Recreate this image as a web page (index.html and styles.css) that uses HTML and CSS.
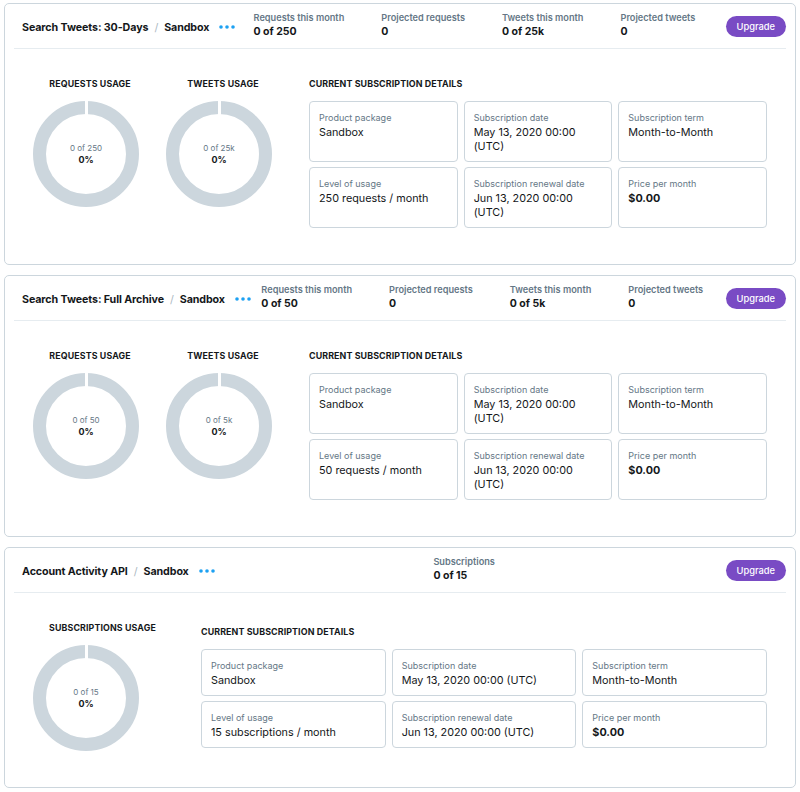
FILE: index.html
```html
<!DOCTYPE html>
<html>
<head>
<meta charset="utf-8">
<link rel="stylesheet" href="styles.css">
</head>
<body>

<section class="card">
  <header class="card-head">
    <div class="title"><span>Search Tweets: 30-Days</span><span class="slash">/</span><span>Sandbox</span></div>
    <svg class="dots" width="16" height="4" viewBox="0 0 16 4"><circle cx="2" cy="2" r="1.8"/><circle cx="8" cy="2" r="1.8"/><circle cx="14" cy="2" r="1.8"/></svg>
    <div class="stats">
      <div class="stat"><div class="stat-label">Requests this month</div><div class="stat-value">0 of 250</div></div>
      <div class="stat"><div class="stat-label">Projected requests</div><div class="stat-value">0</div></div>
      <div class="stat"><div class="stat-label">Tweets this month</div><div class="stat-value">0 of 25k</div></div>
      <div class="stat"><div class="stat-label">Projected tweets</div><div class="stat-value">0</div></div>
    </div>
    <button class="upgrade">Upgrade</button>
  </header>
  <div class="card-body">
    <div class="usage">
      <div class="usage-label">REQUESTS USAGE</div>
      <div class="donut"><span class="donut-of">0 of 250</span><span class="donut-pct">0%</span></div>
    </div>
    <div class="usage">
      <div class="usage-label">TWEETS USAGE</div>
      <div class="donut"><span class="donut-of">0 of 25k</span><span class="donut-pct">0%</span></div>
    </div>
    <div class="details">
      <div class="details-label">CURRENT SUBSCRIPTION DETAILS</div>
      <div class="grid">
        <div class="box"><div class="box-label">Product package</div><div class="box-value">Sandbox</div></div>
        <div class="box"><div class="box-label">Subscription date</div><div class="box-value">May 13, 2020 00:00 (UTC)</div></div>
        <div class="box"><div class="box-label">Subscription term</div><div class="box-value">Month-to-Month</div></div>
        <div class="box"><div class="box-label">Level of usage</div><div class="box-value">250 requests / month</div></div>
        <div class="box"><div class="box-label">Subscription renewal date</div><div class="box-value">Jun 13, 2020 00:00 (UTC)</div></div>
        <div class="box"><div class="box-label">Price per month</div><div class="box-value strong">$0.00</div></div>
      </div>
    </div>
  </div>
</section>

<section class="card">
  <header class="card-head">
    <div class="title"><span>Search Tweets: Full Archive</span><span class="slash">/</span><span>Sandbox</span></div>
    <svg class="dots" width="16" height="4" viewBox="0 0 16 4"><circle cx="2" cy="2" r="1.8"/><circle cx="8" cy="2" r="1.8"/><circle cx="14" cy="2" r="1.8"/></svg>
    <div class="stats">
      <div class="stat"><div class="stat-label">Requests this month</div><div class="stat-value">0 of 50</div></div>
      <div class="stat"><div class="stat-label">Projected requests</div><div class="stat-value">0</div></div>
      <div class="stat"><div class="stat-label">Tweets this month</div><div class="stat-value">0 of 5k</div></div>
      <div class="stat"><div class="stat-label">Projected tweets</div><div class="stat-value">0</div></div>
    </div>
    <button class="upgrade">Upgrade</button>
  </header>
  <div class="card-body">
    <div class="usage">
      <div class="usage-label">REQUESTS USAGE</div>
      <div class="donut"><span class="donut-of">0 of 50</span><span class="donut-pct">0%</span></div>
    </div>
    <div class="usage">
      <div class="usage-label">TWEETS USAGE</div>
      <div class="donut"><span class="donut-of">0 of 5k</span><span class="donut-pct">0%</span></div>
    </div>
    <div class="details">
      <div class="details-label">CURRENT SUBSCRIPTION DETAILS</div>
      <div class="grid">
        <div class="box"><div class="box-label">Product package</div><div class="box-value">Sandbox</div></div>
        <div class="box"><div class="box-label">Subscription date</div><div class="box-value">May 13, 2020 00:00 (UTC)</div></div>
        <div class="box"><div class="box-label">Subscription term</div><div class="box-value">Month-to-Month</div></div>
        <div class="box"><div class="box-label">Level of usage</div><div class="box-value">50 requests / month</div></div>
        <div class="box"><div class="box-label">Subscription renewal date</div><div class="box-value">Jun 13, 2020 00:00 (UTC)</div></div>
        <div class="box"><div class="box-label">Price per month</div><div class="box-value strong">$0.00</div></div>
      </div>
    </div>
  </div>
</section>

<section class="card">
  <header class="card-head">
    <div class="title"><span>Account Activity API</span><span class="slash">/</span><span>Sandbox</span></div>
    <svg class="dots" width="16" height="4" viewBox="0 0 16 4"><circle cx="2" cy="2" r="1.8"/><circle cx="8" cy="2" r="1.8"/><circle cx="14" cy="2" r="1.8"/></svg>
    <div class="stats">
      <div class="stat"><div class="stat-label">Subscriptions</div><div class="stat-value">0 of 15</div></div>
    </div>
    <button class="upgrade">Upgrade</button>
  </header>
  <div class="card-body">
    <div class="usage">
      <div class="usage-label">SUBSCRIPTIONS USAGE</div>
      <div class="donut"><span class="donut-of">0 of 15</span><span class="donut-pct">0%</span></div>
    </div>
    <div class="details details-shift">
      <div class="details-label">CURRENT SUBSCRIPTION DETAILS</div>
      <div class="grid">
        <div class="box"><div class="box-label">Product package</div><div class="box-value">Sandbox</div></div>
        <div class="box"><div class="box-label">Subscription date</div><div class="box-value">May 13, 2020 00:00 (UTC)</div></div>
        <div class="box"><div class="box-label">Subscription term</div><div class="box-value">Month-to-Month</div></div>
        <div class="box"><div class="box-label">Level of usage</div><div class="box-value">15 subscriptions / month</div></div>
        <div class="box"><div class="box-label">Subscription renewal date</div><div class="box-value">Jun 13, 2020 00:00 (UTC)</div></div>
        <div class="box"><div class="box-label">Price per month</div><div class="box-value strong">$0.00</div></div>
      </div>
    </div>
  </div>
</section>

</body>
</html>
```

FILE: styles.css
```css
* { box-sizing: border-box; }

body {
  margin: 3px 4px;
  font-family: Inter, "Noto Sans", "Liberation Sans", sans-serif;
  color: #14171a;
  background: #fff;
}

.card {
  border: 1px solid #ccd6dd;
  border-radius: 5px;
  margin-bottom: 10px;
  background: #fff;
}

.card-head {
  display: flex;
  align-items: center;
  height: 45px;
  margin: 0 9px;
  padding-left: 8px;
  border-bottom: 1px solid #e6ecf0;
}

.title {
  display: flex;
  align-items: center;
  font-size: 10.7px;
  font-weight: 700;
  white-space: nowrap;
  letter-spacing: -0.1px;
  padding-top: 3px;
}

.slash {
  color: #aab8c2;
  font-weight: 400;
  margin: 0 6px;
}

.dots {
  fill: #1da1f2;
  margin-left: 10px;
  margin-top: 2px;
  flex-shrink: 0;
}

.stats {
  flex: 1;
  display: flex;
  justify-content: center;
  gap: 37px;
  padding-left: 2px;
}

.stat-label {
  font-size: 9.2px;
  font-weight: 600;
  color: #657786;
  line-height: 12px;
  white-space: nowrap;
  margin-top: -1px;
}

.stat-value {
  font-size: 10.5px;
  font-weight: 700;
  line-height: 15px;
}

.upgrade {
  margin-left: 14px;
  height: 21px;
  padding: 0 11px;
  border: 0;
  border-radius: 11px;
  background: #794bc4;
  color: #fff;
  font-family: inherit;
  font-size: 9.3px;
  font-weight: 500;
}

.card-body {
  display: flex;
  align-items: flex-start;
  padding: 29px 28px 36px 28px;
}

.usage {
  display: flex;
  flex-direction: column;
  align-items: flex-start;
  min-width: 106px;
  margin-right: 27px;
}

.usage-label {
  width: 100%;
  padding: 0 8px 0 16px;
  text-align: center;
  font-size: 8.8px;
  font-weight: 700;
  line-height: 12px;
  white-space: nowrap;
  margin-bottom: 11px;
  letter-spacing: 0.15px;
}

.donut {
  position: relative;
  width: 106px;
  height: 106px;
  border: 13px solid #ccd6dd;
  border-radius: 50%;
  display: flex;
  flex-direction: column;
  align-items: center;
  justify-content: center;
}

.donut::before {
  content: "";
  position: absolute;
  top: -14px;
  left: 50%;
  width: 3px;
  margin-left: -1.5px;
  height: 15px;
  background: #fff;
}

.donut-of {
  font-size: 8px;
  color: #657786;
  line-height: 11px;
}

.donut-pct {
  font-size: 9px;
  font-weight: 700;
  line-height: 12px;
}

.details {
  flex: 1;
  margin-left: 10px;
}

.details-shift {
  margin-top: 4px;
}

.details-label {
  font-size: 8.9px;
  font-weight: 700;
  line-height: 12px;
  margin-bottom: 11px;
  letter-spacing: 0.1px;
}

.grid {
  display: grid;
  grid-template-columns: 1fr 1fr 1fr;
  gap: 5px 6px;
}

.box {
  border: 1px solid #ccd6dd;
  border-radius: 4px;
  padding: 9px 9px 7px 9px;
}

.box-label {
  font-size: 9px;
  color: #657786;
  line-height: 13px;
  margin-bottom: 2px;
}

.box-value {
  font-size: 10.8px;
  line-height: 14px;
}

.box-value.strong {
  font-weight: 700;
}
```
